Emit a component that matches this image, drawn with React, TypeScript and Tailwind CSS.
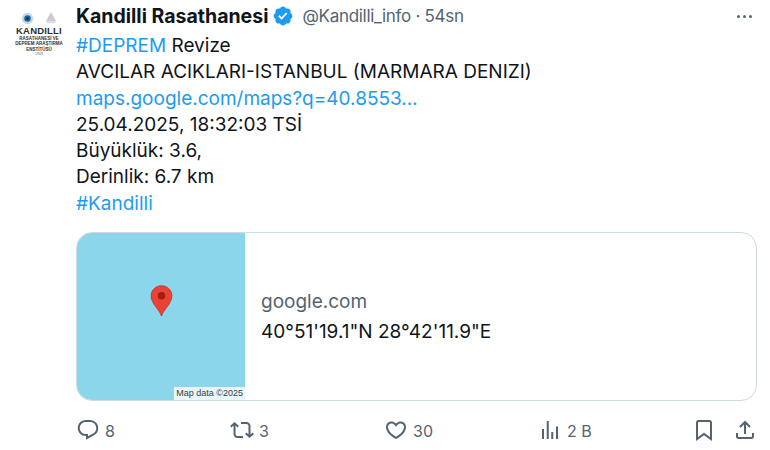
const FONT = { fontFamily: 'Inter, "Noto Sans", sans-serif' };

const icons = {
  reply:
    "M1.751 10c0-4.42 3.584-8 8.005-8h4.366c4.49 0 8.129 3.64 8.129 8.13 0 2.96-1.607 5.68-4.196 7.11l-8.054 4.46v-3.69h-.067c-4.49.1-8.183-3.51-8.183-8.01zm8.005-6c-3.317 0-6.005 2.69-6.005 6 0 3.37 2.77 6.08 6.138 6.01l.351-.01h1.761v2.3l5.087-2.81c1.951-1.08 3.163-3.13 3.163-5.36 0-3.39-2.744-6.13-6.129-6.13H9.756z",
  retweet:
    "M4.5 3.88l4.432 4.14-1.364 1.46L5.5 7.55V16c0 1.1.896 2 2 2H13v2H7.5c-2.209 0-4-1.79-4-4V7.55L1.432 9.48.068 8.02 4.5 3.88zM16.5 6H11V4h5.5c2.209 0 4 1.79 4 4v8.45l2.068-1.93 1.364 1.46-4.432 4.14-4.432-4.14 1.364-1.46 2.068 1.93V8c0-1.1-.896-2-2-2z",
  heart:
    "M16.697 5.5c-1.222-.06-2.679.51-3.89 2.16l-.805 1.09-.806-1.09C9.984 6.01 8.526 5.44 7.304 5.5c-1.243.07-2.349.78-2.91 1.91-.552 1.12-.633 2.78.479 4.82 1.074 1.97 3.257 4.27 7.129 6.61 3.87-2.34 6.052-4.64 7.126-6.61 1.111-2.04 1.03-3.7.477-4.82-.561-1.13-1.666-1.84-2.908-1.91zm4.187 7.69c-1.351 2.48-4.001 5.12-8.379 7.67l-.503.3-.504-.3c-4.379-2.55-7.029-5.19-8.382-7.67-1.36-2.5-1.41-4.86-.514-6.67.887-1.79 2.647-2.91 4.601-3.01 1.651-.09 3.368.56 4.798 2.01 1.429-1.45 3.146-2.1 4.796-2.01 1.954.1 3.714 1.22 4.601 3.01.896 1.81.846 4.17-.514 6.67z",
  views: "M8.75 21V3h2v18h-2zM18 21V8.5h2V21h-2zM4 21l.004-10h2L6 21H4zm9.248 0v-7h2v7h-2z",
  bookmark:
    "M4 4.5C4 3.12 5.119 2 6.5 2h11C18.881 2 20 3.12 20 4.5v18.44l-8-5.71-8 5.71V4.5zM6.5 4c-.276 0-.5.22-.5.5v14.56l6-4.29 6 4.29V4.5c0-.28-.224-.5-.5-.5h-11z",
  share:
    "M12 2.59l5.7 5.7-1.41 1.42L13 6.41V16h-2V6.41l-3.3 3.3-1.41-1.42L12 2.59zM21 15l-.02 3.51c0 1.38-1.12 2.49-2.5 2.49H5.5C4.11 21 3 19.88 3 18.5V15h2v3.5c0 .28.22.5.5.5h12.98c.28 0 .5-.22.5-.5L19 15h2z",
};

const stats = [
  { icon: icons.reply, value: "8" },
  { icon: icons.retweet, value: "3" },
  { icon: icons.heart, value: "30" },
  { icon: icons.views, value: "2 B" },
];

const Icon = ({ d }: { d: string }) => (
  <svg viewBox="0 0 24 24" className="w-6 h-6 fill-[#536471] shrink-0">
    <path d={d} />
  </svg>
);

const Avatar = () => (
  <div className="w-[48px] flex flex-col items-center pt-[9px] text-[#2b2f36]" style={{ fontFamily: '"Liberation Sans", sans-serif' }}>
    <div className="flex items-center gap-[10px] h-[14px]">
      <svg viewBox="0 0 16 16" className="w-[13px] h-[13px]">
        <circle cx="8" cy="8" r="7" fill="#c9d6e4" />
        <circle cx="8" cy="8" r="4" fill="#17699c" />
        <circle cx="8" cy="8" r="1.5" fill="#12233a" />
      </svg>
      <svg viewBox="0 0 16 16" className="w-[14px] h-[14px]">
        <path d="M8 1l6 11H2z" fill="#c9cbce" />
        <rect x="3" y="12" width="10" height="2" fill="#dcdde0" />
      </svg>
    </div>
    <div className="text-[9.5px] leading-[11px] font-bold tracking-[0.2px]">KANDILLI</div>
    <div className="text-[4.5px] leading-[5.3px] font-bold whitespace-nowrap">RASATHANESİ VE</div>
    <div className="text-[4.5px] leading-[5.3px] font-bold whitespace-nowrap">DEPREM ARAŞTIRMA</div>
    <div className="text-[4.5px] leading-[5.3px] font-bold">ENSTİTÜSÜ</div>
    <div className="text-[3.5px] leading-[4.5px] text-[#777]">1868</div>
  </div>
);

const Pin = () => (
  <svg viewBox="0 0 24 34" className="w-[23px] h-[32px]">
    <path d="M12 33C10 26 1 20 1 11.5 1 5.4 6 .8 12 .8s11 4.6 11 10.7C23 20 14 26 12 33z" fill="#ea4335" stroke="#c5352a" strokeWidth="1" />
    <circle cx="12" cy="11.5" r="4" fill="#a61b12" />
  </svg>
);

export default function App() {
  return (
    <div className="w-[770px] h-[450px] bg-white text-[#0f1419] flex overflow-hidden" style={FONT}>
      <div className="w-[76px] pl-[15px] pt-[2px] shrink-0">
        <Avatar />
      </div>
      <div className="w-[681px] flex flex-col">
        <div className="flex items-center h-[32px] leading-[24px]">
          <span className="font-bold text-[19.5px]">Kandilli Rasathanesi</span>
          <svg viewBox="0 0 24 24" className="w-[22px] h-[22px] fill-[#1d9bf0] ml-[4px]">
            <path d="M22.25 12c0-1.43-.88-2.67-2.19-3.34.46-1.39.2-2.9-.81-3.91s-2.52-1.27-3.91-.81c-.66-1.31-1.91-2.19-3.34-2.19s-2.67.88-3.33 2.19c-1.4-.46-2.91-.2-3.92.81s-1.26 2.52-.8 3.91c-1.31.67-2.2 1.91-2.2 3.34s.89 2.67 2.2 3.34c-.46 1.39-.21 2.9.8 3.91s2.52 1.26 3.91.81c.67 1.31 1.91 2.19 3.34 2.19s2.68-.88 3.34-2.19c1.39.45 2.9.2 3.91-.81s1.27-2.52.81-3.91c1.31-.67 2.19-1.91 2.19-3.34zm-11.71 4.2L6.8 12.46l1.41-1.42 2.26 2.26 4.8-5.23 1.47 1.36-6.2 6.77z" />
          </svg>
          <span className="text-[#536471] text-[17px] tracking-[-0.3px] ml-[8px]">@Kandilli_info · 54sn</span>
          <div className="ml-auto mr-[5px] flex gap-[3px]">
            <span className="w-[3px] h-[3px] rounded-full bg-[#536471]" />
            <span className="w-[3px] h-[3px] rounded-full bg-[#536471]" />
            <span className="w-[3px] h-[3px] rounded-full bg-[#536471]" />
          </div>
        </div>
        <div className="text-[19px] leading-[26.3px] mt-[1px]">
          <div><span className="text-[#1d9bf0]">#DEPREM</span> Revize</div>
          <div>AVCILAR ACIKLARI-ISTANBUL (MARMARA DENIZI)</div>
          <div className="text-[#1d9bf0]">maps.google.com/maps?q=40.8553…</div>
          <div>25.04.2025, 18:32:03 TSİ</div>
          <div>Büyüklük: 3.6,</div>
          <div>Derinlik: 6.7 km</div>
          <div className="text-[#1d9bf0]">#Kandilli</div>
        </div>
        <div className="mt-[15px] h-[169px] flex rounded-[16px] border border-[#cfd9de] overflow-hidden">
          <div className="relative w-[168px] bg-[#8cd6ec] flex items-center justify-center pb-[32px] shrink-0">
            <Pin />
            <span className="absolute right-0 bottom-0 h-[13px] px-[2px] bg-[#e8f5fa] text-[9px] leading-[13px] text-[#3c4043] whitespace-nowrap" style={{ fontFamily: '"Liberation Sans", sans-serif' }}>
              Map data ©2025
            </span>
          </div>
          <div className="flex-1 flex flex-col justify-center pl-[16px] text-[19px] leading-[30px]">
            <div className="text-[#536471]">google.com</div>
            <div>40°51'19.1"N 28°42'11.9"E</div>
          </div>
        </div>
        <div className="flex items-center mt-[17px] h-[24px] text-[#536471] text-[16px]">
          <div className="grid grid-cols-4 w-[620px]">
            {stats.map((stat) => (
              <div key={stat.value} className="flex items-center gap-[5px]">
                <Icon d={stat.icon} />
                <span className="pt-[1px]">{stat.value}</span>
              </div>
            ))}
          </div>
          <div className="flex gap-[17px] ml-auto">
            <Icon d={icons.bookmark} />
            <Icon d={icons.share} />
          </div>
        </div>
      </div>
    </div>
  );
}
